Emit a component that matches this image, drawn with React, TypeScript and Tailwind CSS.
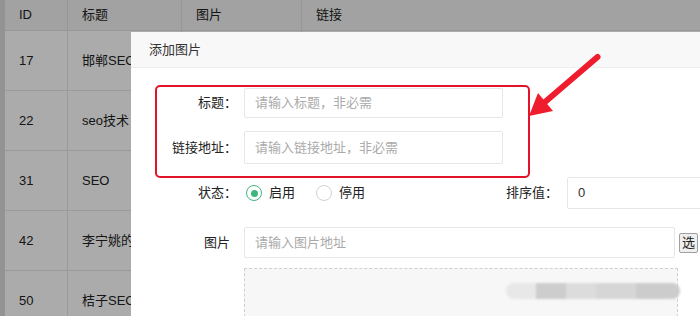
import React from "react";

type Row = { id: string; title: string };

const ROWS: Row[] = [
  { id: "17", title: "邯郸SEO" },
  { id: "22", title: "seo技术" },
  { id: "31", title: "SEO" },
  { id: "42", title: "李宁姚的" },
  { id: "50", title: "桔子SEO" },
];

const FONT = { fontFamily: '"Liberation Sans", "Noto Sans CJK SC", sans-serif' };

function Field({ placeholder, className = "" }: { placeholder: string; className?: string }) {
  return (
    <div
      className={`flex items-center rounded-[2px] border border-[#e6e6e6] bg-white pl-[10px] text-[13px] text-[#aaaaaa] ${className}`}
    >
      {placeholder}
    </div>
  );
}

function Radio({ checked, label }: { checked?: boolean; label: string }) {
  return (
    <div className="flex items-center gap-[7px]">
      <span
        className={`flex h-[16px] w-[16px] items-center justify-center rounded-full border-[1.5px] ${
          checked ? "border-[#3fb67f]" : "border-[#d2d2d2]"
        }`}
      >
        {checked && <span className="h-[7px] w-[7px] rounded-full bg-[#3fb67f]" />}
      </span>
      <span className="text-[13px] text-[#222]">{label}</span>
    </div>
  );
}

export default function App() {
  return (
    <div className="relative h-[316px] w-[700px] overflow-hidden bg-white text-[#222]" style={FONT}>
      {/* background list */}
      <div className="h-full border-l-[5px] border-[#dcdcdc]">
        <div className="grid h-[31px] grid-cols-[63px_114px_120px_1fr] border-b border-[#e2e2e2] bg-[#f2f2f2] text-[13px]">
          {["ID", "标题", "图片", "链接"].map((h, i) => (
            <div key={i} className={`flex items-center pl-[14px] ${i < 3 ? "border-r border-[#e2e2e2]" : ""}`}>
              {h}
            </div>
          ))}
        </div>
        {ROWS.map((r) => (
          <div
            key={r.id}
            className="grid h-[60px] grid-cols-[63px_114px_120px_1fr] border-b border-[#e6e6e6] text-[13px]"
          >
            <div className="flex items-center border-r border-[#e6e6e6] pl-[14px]">{r.id}</div>
            <div className="flex items-center whitespace-nowrap border-r border-[#e6e6e6] pl-[14px]">{r.title}</div>
            <div className="border-r border-[#e6e6e6]" />
            <div />
          </div>
        ))}
      </div>

      <div className="absolute inset-0 bg-black/[0.33]" />

      {/* dialog */}
      <div className="absolute left-[131px] top-[32px] h-[300px] w-[600px] bg-white">
        <div className="flex h-[36px] items-center border-b border-[#eeeeee] bg-[#f8f8f8] pl-[18px] text-[13px] text-[#333]">
          添加图片
        </div>
        <div className="pl-[24px] pt-[17px]">
          <div className="w-[375px] rounded-[5px] border-2 border-[#e5132a] pb-[12px] pt-[1px]">
            <div className="flex items-center">
              <div className="mr-[7px] w-[80px] text-right text-[13px]">标题：</div>
              <Field placeholder="请输入标题，非必需" className="h-[30px] w-[259px]" />
            </div>
            <div className="mt-[13px] flex items-center">
              <div className="mr-[7px] w-[80px] text-right text-[13px]">链接地址：</div>
              <Field placeholder="请输入链接地址，非必需" className="h-[33px] w-[259px]" />
            </div>
          </div>

          <div className="-mt-[1px] flex h-[32px] items-center pl-[2px]">
            <div className="mr-[7px] w-[80px] text-right text-[13px]">状态：</div>
            <div className="flex w-[234px] items-center gap-[21px] pl-[2px]">
              <Radio checked label="启用" />
              <Radio label="停用" />
            </div>
            <div className="mr-[9px] w-[80px] text-right text-[13px]">排序值：</div>
            <div className="flex h-[32px] w-[150px] items-center rounded-[2px] border border-[#e6e6e6] pl-[10px] text-[13px] text-[#333]">
              0
            </div>
          </div>

          <div className="mt-[18px] flex h-[31px] items-center pl-[2px]">
            <div className="mr-[7px] w-[80px] pr-[7px] text-right text-[13px]">图片</div>
            <Field placeholder="请输入图片地址" className="h-[31px] w-[431px]" />
            <div className="ml-[4px] flex h-[20px] items-center whitespace-nowrap rounded-[2px] border border-[#a0a0a0] bg-[#efefef] px-[2px] text-[13px] text-[#222]">
              选
            </div>
          </div>

          <div className="mt-[10px] flex">
            <div className="w-[89px] shrink-0" />
            <div className="relative h-[80px] w-[434px] border border-dashed border-[#cfcfcf] bg-[#f7f7f7]">
              <div className="absolute left-[261px] top-[14px] flex h-[16px] w-[174px] overflow-hidden rounded-full blur-[1px]">
                <div className="w-[30px] bg-[#e8e8e8]" />
                <div className="w-[30px] bg-[#cdcdcd]" />
                <div className="w-[30px] bg-[#dcdcdc]" />
                <div className="w-[40px] bg-[#d6d6d6]" />
                <div className="flex-1 bg-[#cccccc]" />
              </div>
            </div>
          </div>
        </div>
      </div>

      {/* annotation arrow */}
      <svg className="pointer-events-none absolute left-0 top-0" width="700" height="316">
        <line x1="597.5" y1="57" x2="545" y2="102" stroke="#ef1c2e" strokeWidth="6" strokeLinecap="round" />
        <polygon points="529,116 538,93 553,111" fill="#ef1c2e" />
      </svg>
    </div>
  );
}
